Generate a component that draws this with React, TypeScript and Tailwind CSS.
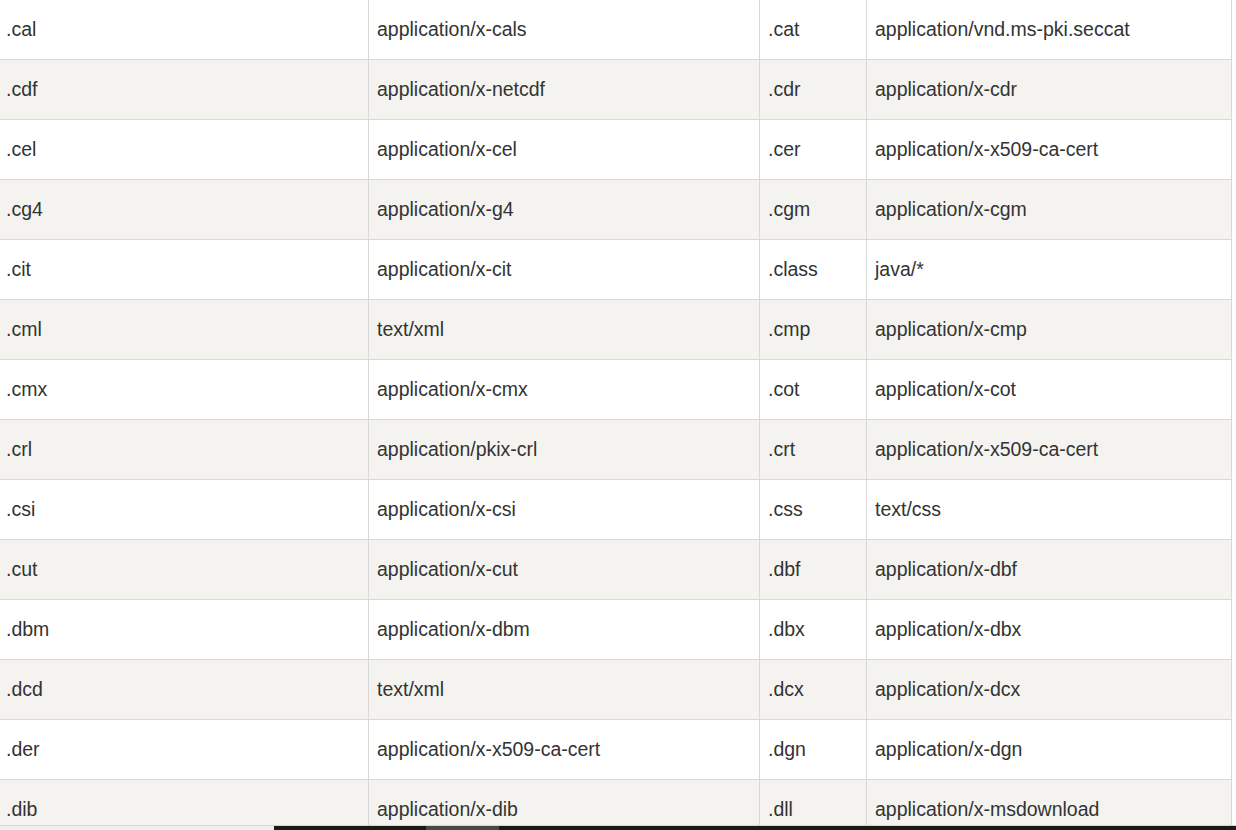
const rows: [string, string, string, string][] = [
  [".cal", "application/x-cals", ".cat", "application/vnd.ms-pki.seccat"],
  [".cdf", "application/x-netcdf", ".cdr", "application/x-cdr"],
  [".cel", "application/x-cel", ".cer", "application/x-x509-ca-cert"],
  [".cg4", "application/x-g4", ".cgm", "application/x-cgm"],
  [".cit", "application/x-cit", ".class", "java/*"],
  [".cml", "text/xml", ".cmp", "application/x-cmp"],
  [".cmx", "application/x-cmx", ".cot", "application/x-cot"],
  [".crl", "application/pkix-crl", ".crt", "application/x-x509-ca-cert"],
  [".csi", "application/x-csi", ".css", "text/css"],
  [".cut", "application/x-cut", ".dbf", "application/x-dbf"],
  [".dbm", "application/x-dbm", ".dbx", "application/x-dbx"],
  [".dcd", "text/xml", ".dcx", "application/x-dcx"],
  [".der", "application/x-x509-ca-cert", ".dgn", "application/x-dgn"],
  [".dib", "application/x-dib", ".dll", "application/x-msdownload"],
];

const cell = "flex h-[60px] items-center border-r border-b border-[#d9d9d9] pl-2";

export default function App() {
  return (
    <div className="relative h-[830px] w-[1236px] overflow-hidden bg-white font-['Liberation_Sans',Arial,sans-serif] text-[19.5px] text-[#333]">
      <div className="w-[1232px]">
        {rows.map((r, i) => (
          <div
            key={r[0]}
            className={`grid grid-cols-[369px_391px_107px_365px] ${i % 2 ? "bg-[#f4f3f0]" : "bg-white"}`}
          >
            <div className={`${cell} pl-[6px]`}>{r[0]}</div>
            <div className={cell}>{r[1]}</div>
            <div className={cell}>{r[2]}</div>
            <div className={cell}>{r[3]}</div>
          </div>
        ))}
      </div>

      {/* bottom strip over the table */}
      <div className="absolute bottom-0 left-0 flex h-[5px] w-full flex-col">
        <div className="h-px bg-[#d4d4d4]" />
        <div className="flex h-[4px]">
          <div className="w-[274px] bg-[#f0f0f0]" />
          <div className="w-[152px] bg-[#1d1a15]" />
          <div className="w-[73px] bg-[#4b4944]" />
          <div className="flex-1 bg-[#1d1a15]" />
        </div>
      </div>
    </div>
  );
}
